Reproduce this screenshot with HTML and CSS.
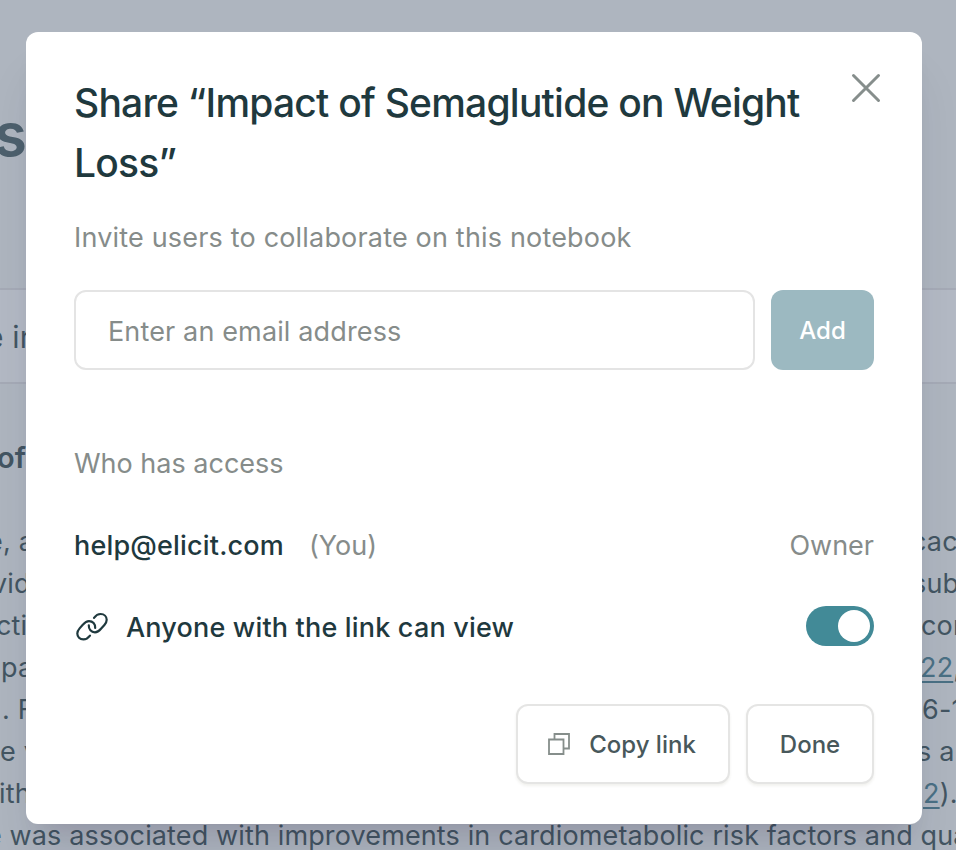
FILE: index.html
```html
<!DOCTYPE html>
<html lang="en">
<head>
<meta charset="utf-8">
<title>Share notebook</title>
<link rel="stylesheet" href="styles.css">
</head>
<body>
<div class="page" aria-hidden="true">
  <div class="page-title"><span>s</span></div>
  <div class="query"><span>e in</span></div>
  <div class="subtitle"><span>of</span></div>
  <div class="lines">
    <div class="line"><span class="l l1">e, a</span><span class="r r1">cac</span></div>
    <div class="line"><span class="l l2">vid</span><span class="r r2">sub</span></div>
    <div class="line"><span class="l l3">cti</span><span class="r r3">con</span></div>
    <div class="line"><span class="l l4">pa</span><span class="r r4"><u>22</u>,</span></div>
    <div class="line"><span class="l l5">. F</span><span class="r r5">6-1</span></div>
    <div class="line"><span class="l l6">e v</span><span class="r r6">s a</span></div>
    <div class="line"><span class="l l7">ith</span><span class="r r7"><u>2</u>).</span></div>
    <div class="line"><span class="l l8">e was associated with improvements in cardiometabolic risk factors and qua</span></div>
  </div>
</div>
<main class="overlay">
  <section class="dialog" role="dialog">
    <header class="head">
      <h1>Share “Impact of Semaglutide on Weight Loss”</h1>
      <svg class="close" viewBox="0 0 30 30"><path d="M2.500 2.500 27.500 27.500M27.500 2.500 2.500 27.500"/></svg>
    </header>
    <p class="muted invite">Invite users to collaborate on this notebook</p>
    <div class="form">
      <div class="input">Enter an email address</div>
      <button class="add">Add</button>
    </div>
    <p class="muted access">Who has access</p>
    <div class="row user">
      <span class="strong email">help@elicit.com</span><span class="muted you">(You)</span><span class="muted owner">Owner</span>
    </div>
    <div class="row link-row">
      <svg class="chain" viewBox="0 0 36 36"><path d="M16 27.600C14.200 30 12 31.400 9.400 31.400C5.800 31.400 3.300 28.800 3.300 25.600C3.300 23.400 4.200 22 5.600 20.400L9 16.600C11 14.200 12.600 13.100 15 13.100C18.800 13.100 21.400 16 21.200 20M20 9.800C21.800 7.400 24 6 26.600 6C30.200 6 32.700 8.600 32.700 11.800C32.700 14 31.800 15.400 30.400 17L27 20.800C25 23.200 23.400 24.300 21 24.300C17.200 24.300 14.600 21.400 14.800 17.400"/></svg>
      <span class="strong anyone">Anyone with the link can view</span>
      <span class="toggle"><i></i></span>
    </div>
    <footer class="actions">
      <button class="btn copy"><svg class="copy-icon" viewBox="0 0 22 22"><path d="M6.500 6V1H21V15.500H16M1 6.500H15.500V21H1Z"/></svg><span>Copy link</span></button>
      <button class="btn done">Done</button>
    </footer>
  </section>
</main>
</body>
</html>
```
FILE: styles.css
```css
* { box-sizing: border-box; }
body {
  margin: 0;
  width: 956px;
  height: 850px;
  overflow: hidden;
  display: grid;
  background: #aeb5bf;
  font-family: Inter, "Liberation Sans", sans-serif;
  font-size: 27px;
  letter-spacing: .18px;
  color: #435562;
}
h1, p { margin: 0; }
.page, .overlay { grid-area: 1 / 1; min-width: 0; height: 850px; overflow: hidden; }
.page { white-space: nowrap; }
.page-title {
  height: 288px;
  padding-top: 94px;
  font-size: 60px;
  line-height: 80px;
  font-weight: 600;
  text-indent: -6px;
  color: #4d606d;
}
.query {
  height: 96px;
  border-top: 2px solid #a5aab6;
  border-bottom: 2px solid #a5aab6;
  background: #b3b9c4;
  line-height: 94px;
  font-size: 30px;
  text-indent: -14px;
}
.subtitle {
  height: 137px;
  line-height: 147px;
  font-weight: 600;
  font-size: 29px;
  text-indent: -3px;
}
.line {
  display: grid;
  grid-template-columns: 922px 34px;
  height: 42px;
  line-height: 42px;
}
.l { min-width: 0; }
.l1 { text-indent: -13px; }
.l2 { text-indent: -8px; }
.l3 { text-indent: -4px; }
.l4 { text-indent: 1px; }
.l5 { text-indent: 2px; }
.l6 { text-indent: 0; }
.l7 { text-indent: -1px; }
.l8 { text-indent: -14px; letter-spacing: .13px; }
.r1 { text-indent: -11px; }
.r2 { text-indent: -10px; }
.r3 { text-indent: -1px; }
.r4 { text-indent: -2px; }
.r5 { text-indent: 0; }
.r6 { text-indent: -5px; }
.r7 { text-indent: 1px; }
u { color: #4a7084; text-underline-offset: 4px; text-decoration-thickness: 2px; }

.overlay { padding: 32px 34px 0 26px; }
.dialog {
  height: 792px;
  padding: 41px 48px 40px;
  border-radius: 12px;
  background: #fff;
  box-shadow: 0 40px 50px -10px rgba(30, 20, 60, .1), 0 16px 20px -12px rgba(30, 10, 40, .1);
  display: flex;
  flex-direction: column;
}
.head { display: flex; }
h1 {
  flex: 1;
  font-size: 39px;
  line-height: 60px;
  font-weight: 500;
  letter-spacing: -.77px;
  color: #1f393e;
}
.close {
  width: 30px;
  height: 30px;
  margin: 0 -7px 0 0;
  fill: none;
  stroke: #868e8c;
  stroke-width: 3;
  stroke-linecap: round;
}
.muted { color: #868c8a; line-height: 40px; }
.strong { color: #1f393e; font-weight: 500; line-height: 40px; }
.invite { margin-top: 25px; }
.form { display: flex; gap: 16px; margin-top: 32px; }
.input {
  flex: 1;
  height: 80px;
  padding-left: 32px;
  border: 2px solid #e4e4e4;
  border-radius: 12px;
  line-height: 80px;
  letter-spacing: .14px;
  color: #868c8a;
}
button { font: 500 24px Inter, "Liberation Sans", sans-serif; padding: 0; letter-spacing: 0; }
.add {
  width: 103px;
  height: 80px;
  border: 0;
  border-radius: 12px;
  background: #9cb9c1;
  color: #fff;
}
.access { margin-top: 74px; letter-spacing: 0; }
.row { display: flex; align-items: center; height: 40px; }
.user { margin-top: 42px; }
.you { margin-left: 25px; letter-spacing: 0; }
.owner { margin-left: auto; letter-spacing: 0; }
.link-row { margin-top: 40px; }
.chain {
  width: 36px;
  height: 36px;
  fill: none;
  stroke: #1f393e;
  stroke-width: 2.2;
  stroke-linecap: round;
}
.anyone { margin-left: 16px; padding-top: 3px; }
.toggle {
  display: flex;
  justify-content: flex-end;
  width: 68px;
  height: 40px;
  padding: 4px;
  margin-left: auto;
  border-radius: 20px;
  background: #428a97;
}
.toggle i { width: 32px; height: 32px; border-radius: 50%; background: #fff; }
.actions { display: flex; justify-content: flex-end; gap: 16px; margin-top: 58px; }
.btn {
  display: flex;
  align-items: center;
  justify-content: center;
  height: 80px;
  border: 2px solid #e5e5e4;
  border-radius: 12px;
  background: #fff;
  color: #48585b;
  box-shadow: 0 2px 3px rgba(60, 50, 20, .07);
}
.copy { width: 214px; gap: 19px; padding-right: 2px; }
.done { width: 128px; }
.copy-icon { width: 22px; height: 22px; fill: none; stroke: #868e8b; stroke-width: 1.8; }
```
